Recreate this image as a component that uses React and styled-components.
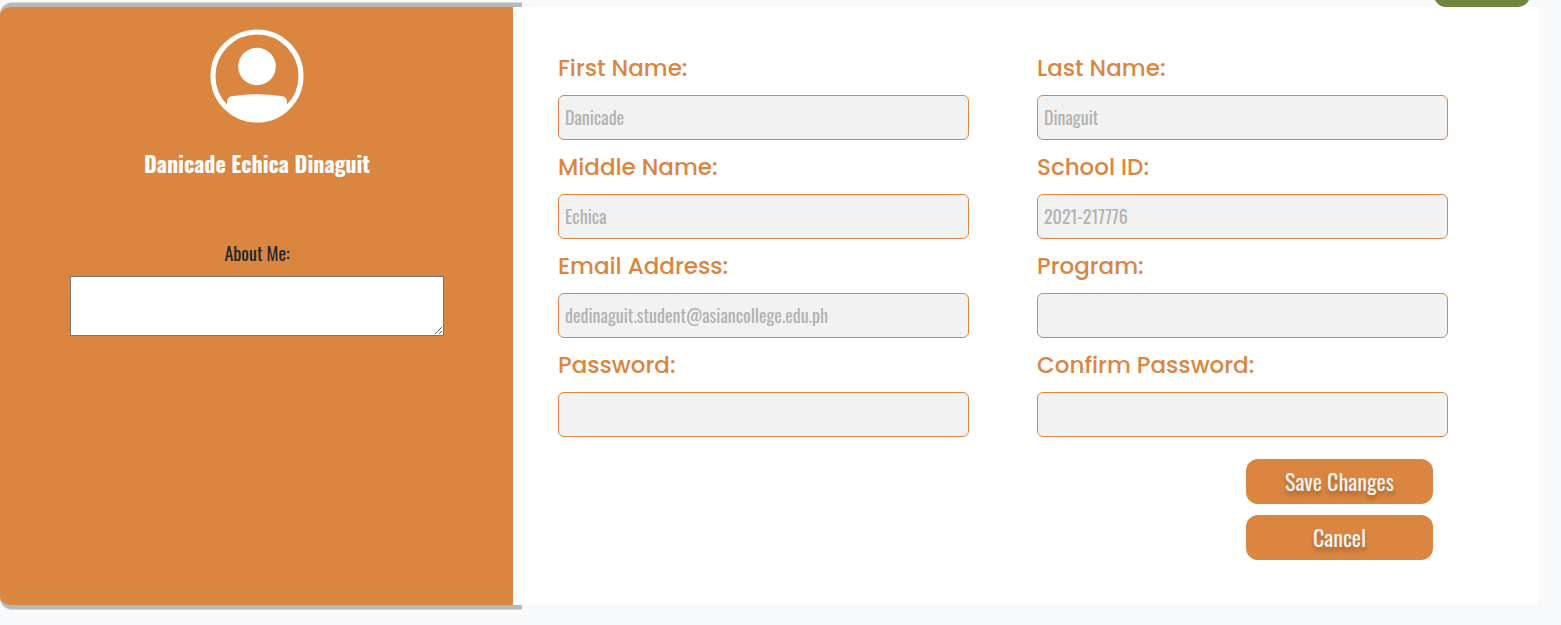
import React from "react";
import styled, { createGlobalStyle } from "styled-components";

const orange = "#da8640";
const condensed = `Oswald, "Liberation Sans Narrow", "Roboto Condensed", "Open Sans Condensed", "Liberation Sans", sans-serif`;
const rounded = `Poppins, Inter, sans-serif`;

const GlobalStyle = createGlobalStyle`
  *, *::before, *::after { box-sizing: border-box; }
  body {
    margin: 0;
    background: #f8f9fb;
    color: #212529;
    font-family: ${condensed};
    font-size: 18px;
  }
`;

const Page = styled.div`
  padding: 0 22px 20px 0;
`;

const TopBar = styled.header`
  display: flex;
  justify-content: flex-end;
  height: 7px;
  padding-right: 9px;
`;

const TopTab = styled.div`
  width: 96px;
  height: 30px;
  margin-top: -23px;
  border-radius: 12px;
  background: #70843e;
`;

const Profile = styled.main`
  display: grid;
  grid-template-columns: 1fr 2fr;
`;

const Sidebar = styled.aside`
  display: flex;
  flex-direction: column;
  align-items: center;
  margin: -4px -9px -4px 0;
  padding: 22px 78px 0 70px;
  border: solid #b8b8b8;
  border-width: 4px 0;
  border-radius: 12px 0 0 12px;
  box-shadow: 0 -1px #d8d9db, 0 1px #d8d9db;
  background: ${orange};
`;

const Avatar = styled.svg`
  width: 94px;
  height: 94px;
`;

const FullName = styled.h1`
  margin: 23px 0 0;
  color: #fff;
  font-size: 22px;
  line-height: 34px;
  font-weight: 700;
  white-space: nowrap;
`;

const AboutLabel = styled.label`
  margin-top: 60px;
  font-size: 18px;
  line-height: 27px;
`;

const AboutText = styled.textarea`
  width: 100%;
  height: 60px;
  margin-top: 9px;
  padding: 4px;
  border: 1px solid #767676;
  border-radius: 0;
  background: #fff;
  font: inherit;
  resize: both;
`;

const Form = styled.form`
  position: relative;
  padding: 43px 91px 45px 45px;
  background: #fff;
`;

const Fields = styled.div`
  display: grid;
  grid-template-columns: 1fr 1fr;
  gap: 9px 68px;
`;

const Field = styled.div`
  display: flex;
  flex-direction: column;
  gap: 9px;
  min-width: 0;
`;

const FieldLabel = styled.label`
  color: ${orange};
  font-family: ${rounded};
  font-size: 23px;
  line-height: 36px;
  font-weight: 500;
`;

const FieldInput = styled.input`
  width: 100%;
  height: 45px;
  padding: 0 6px 2px;
  border: 1px solid ${orange};
  border-radius: 6px;
  background: #f2f2f2;
  color: #b3b3b3;
  font-family: ${condensed};
  font-size: 18px;
`;

const Actions = styled.div`
  display: flex;
  flex-direction: column;
  align-items: flex-end;
  gap: 11px;
  padding: 22px 15px 0 0;
`;

const ActionButton = styled.button`
  width: 187px;
  height: 45px;
  padding: 0 0 2px;
  border: 0;
  border-radius: 12px;
  background: ${orange};
  color: #f2f2f2;
  font-family: ${condensed};
  font-size: 22px;
  font-weight: 400;
  text-shadow: 0 4px 4px rgba(0, 0, 0, 0.25);
  cursor: pointer;
`;

const fields = [
  { id: "first", label: "First Name:", value: "Danicade" },
  { id: "last", label: "Last Name:", value: "Dinaguit" },
  { id: "middle", label: "Middle Name:", value: "Echica" },
  { id: "school", label: "School ID:", value: "2021-217776" },
  { id: "email", label: "Email Address:", value: "dedinaguit.student@asiancollege.edu.ph", type: "email" },
  { id: "program", label: "Program:", value: "" },
  { id: "password", label: "Password:", value: "", type: "password" },
  { id: "confirm", label: "Confirm Password:", value: "", type: "password" },
];

export default function App() {
  return (
    <>
      <GlobalStyle />
      <Page>
        <TopBar>
          <TopTab />
        </TopBar>
        <Profile>
          <Sidebar>
            <Avatar viewBox="0 0 94 94" aria-hidden="true">
              <circle cx="47" cy="47" r="44" fill="none" stroke="#fff" strokeWidth="5" />
              <circle cx="47" cy="37.5" r="18.8" fill="#fff" />
              <path
                d="M17 77V73Q17 67.5 23 67Q47 63.5 71 67Q77 67.5 77 73V77A43 43 0 0 1 47 92A43 43 0 0 1 17 77Z"
                fill="#fff"
              />
            </Avatar>
            <FullName>Danicade Echica Dinaguit</FullName>
            <AboutLabel htmlFor="about">About Me:</AboutLabel>
            <AboutText id="about" />
          </Sidebar>
          <Form onSubmit={(event) => event.preventDefault()}>
            <Fields>
              {fields.map(({ id, label, value, type = "text" }) => (
                <Field key={id}>
                  <FieldLabel htmlFor={id}>{label}</FieldLabel>
                  <FieldInput id={id} type={type} defaultValue={value} />
                </Field>
              ))}
            </Fields>
            <Actions>
              <ActionButton type="submit">Save Changes</ActionButton>
              <ActionButton type="button">Cancel</ActionButton>
            </Actions>
          </Form>
        </Profile>
      </Page>
    </>
  );
}
